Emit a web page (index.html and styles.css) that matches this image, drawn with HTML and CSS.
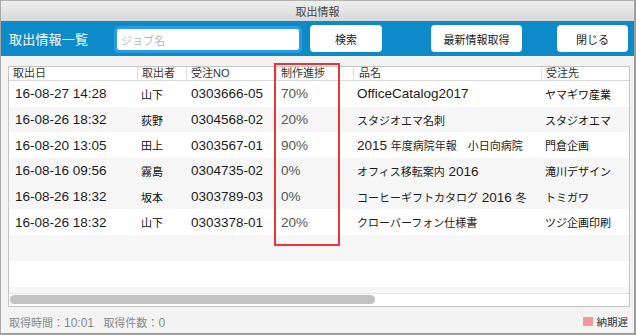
FILE: index.html
```html
<!DOCTYPE html>
<html lang="ja">
<head>
<meta charset="utf-8">
<title>取出情報</title>
<link rel="stylesheet" href="styles.css">
</head>
<body>
<div class="window">
  <div class="titlebar">取出情報</div>
  <div class="toolbar">
    <div class="apptitle">取出情報一覧</div>
    <input class="search" type="text" placeholder="ジョブ名">
    <button class="btn btn-search">検索</button>
    <button class="btn btn-fetch">最新情報取得</button>
    <button class="btn btn-close">閉じる</button>
  </div>
  <div class="content">
    <div class="tablebox">
      <div class="thead">
        <span>取出日</span><span>取出者</span><span>受注NO</span><span>制作進捗</span><span class="c5">品名</span><span>受注先</span>
      </div>
      <div class="rows">
        <div class="row">
          <span class="c1">16-08-27 14:28</span><span class="c2">山下</span><span class="c3">0303666-05</span><span class="c4">70%</span><span class="c5">OfficeCatalog2017</span><span class="c6">ヤマギワ産業</span>
        </div>
        <div class="row g">
          <span class="c1">16-08-26 18:32</span><span class="c2">荻野</span><span class="c3">0304568-02</span><span class="c4">20%</span><span class="c5"><span class="j">スタジオエマ名刺</span></span><span class="c6">スタジオエマ</span>
        </div>
        <div class="row">
          <span class="c1">16-08-20 13:05</span><span class="c2">田上</span><span class="c3">0303567-01</span><span class="c4">90%</span><span class="c5">2015 <span class="j">年度病院年報　小日向病院</span></span><span class="c6">門倉企画</span>
        </div>
        <div class="row g">
          <span class="c1">16-08-16 09:56</span><span class="c2">霧島</span><span class="c3">0304735-02</span><span class="c4">0%</span><span class="c5"><span class="j">オフィス移転案内</span> 2016</span><span class="c6">滝川デザイン</span>
        </div>
        <div class="row g">
          <span class="c1">16-08-26 18:32</span><span class="c2">坂本</span><span class="c3">0303789-03</span><span class="c4">0%</span><span class="c5"><span class="j">コーヒーギフトカタログ</span> 2016 <span class="j">冬</span></span><span class="c6">トミガワ</span>
        </div>
        <div class="row">
          <span class="c1">16-08-26 18:32</span><span class="c2">山下</span><span class="c3">0303378-01</span><span class="c4">20%</span><span class="c5"><span class="j">クローバーフォン仕様書</span></span><span class="c6">ツジ企画印刷</span>
        </div>
        <div class="row g"></div>
        <div class="row"></div>
        <div class="row g"></div>
      </div>
      <div class="hscroll"><div class="thumb"></div></div>
      <div class="highlight"></div>
    </div>
    <div class="footer">
      <div class="status"><span class="j">取得時間：</span>10:01 <span class="j gap">取得件数：</span>0</div>
      <div class="legend"><span class="swatch"></span><span class="legend-text">納期遅</span></div>
    </div>
  </div>
</div>
</body>
</html>
```

FILE: styles.css
```css
html, body {
  margin: 0;
  padding: 0;
}

body {
  width: 636px;
  height: 335px;
  overflow: hidden;
  background: #ffffff;
  font-family: "Liberation Sans", "Noto Sans CJK JP", sans-serif;
}

.window {
  box-sizing: border-box;
  width: 636px;
  height: 335px;
  border-left: 1px solid #a6a6a6;
  border-right: 2px solid #9e9e9e;
  border-bottom: 2px solid #a0a0a0;
  background: #f3f3f3;
  display: flex;
  flex-direction: column;
}

.titlebar {
  height: 21px;
  box-sizing: border-box;
  border-top: 1px solid #b2b2b2;
  background: linear-gradient(#efefef, #d8d8d8);
  display: flex;
  align-items: center;
  justify-content: center;
  font-family: "Noto Sans CJK JP", sans-serif;
  font-size: 11px;
  color: #444444;
}

.toolbar {
  height: 35px;
  background: #0d8bc9;
  display: flex;
  align-items: center;
  padding-left: 8px;
}

.apptitle {
  width: 108px;
  color: #ffffff;
  font-family: "Noto Sans CJK JP", sans-serif;
  font-size: 13px;
  letter-spacing: 0.2px;
}

.search {
  width: 182px;
  height: 21px;
  box-sizing: border-box;
  margin: 2px 0 0 0;
  border: 0;
  border-radius: 2px;
  box-shadow: 0 0 0 3px #2c9ce0;
  background: #ffffff;
  padding: 0 4px;
  font-family: "Noto Sans CJK JP", sans-serif;
  font-size: 11px;
  color: #333333;
  outline: none;
}

.search::placeholder {
  color: #b9b9b9;
}

.btn {
  height: 27px;
  box-sizing: border-box;
  padding: 0;
  border: 0;
  border-radius: 4px;
  background: #ffffff;
  font-family: "Noto Sans CJK JP", sans-serif;
  font-size: 11px;
  color: #222222;
}

.btn-search { width: 72px; margin-left: 11px; }
.btn-fetch { width: 91px; margin-left: 49px; }
.btn-close { width: 71px; margin-left: 35px; }

.content {
  flex: 1;
  padding: 10px 5px 0 7px;
  display: flex;
  flex-direction: column;
}

.tablebox {
  position: relative;
  width: 622px;
  height: 241px;
  box-sizing: border-box;
  border: 1px solid #c4c4c4;
  background: #ffffff;
  display: flex;
  flex-direction: column;
}

.thead {
  display: grid;
  grid-template-columns: 128px 49px 90px 77px 188px 88px;
  height: 13px;
  border-bottom: 1px solid #d9d9d9;
  font-size: 11px;
  line-height: 13px;
  color: #333333;
}

.thead span {
  padding-left: 4px;
  border-left: 1px solid #dddddd;
  white-space: nowrap;
  overflow: hidden;
}

.thead span:first-child {
  border-left: 0;
}

.thead span.c5 {
  padding-left: 5px;
}

.rows {
  height: 212px;
  overflow: hidden;
}

.row {
  display: grid;
  grid-template-columns: 128px 49px 90px 77px 188px 88px;
  height: 25.7px;
  align-items: center;
  font-size: 13.5px;
  color: #1c1c1c;
  white-space: nowrap;
}

.row.g {
  background: #f6f6f6;
}

.row > span {
  overflow: hidden;
}

.c1 { padding-left: 6px; }
.c2 { padding-left: 4px; font-size: 11px; color: #111111; }
.c3 { padding-left: 5px; }
.c4 { padding-left: 5px; color: #555555; }
.c5 { padding-left: 4px; }
.c6 { padding-left: 4px; font-size: 11px; color: #111111; }

.j {
  font-size: 11px;
}

.hscroll {
  height: 13px;
  box-sizing: border-box;
  border-top: 1px solid #e6e6e6;
  padding: 1px 0 0 1px;
}

.thumb {
  width: 365px;
  height: 9px;
  border-radius: 5px;
  background: #c2c2c2;
}

.highlight {
  position: absolute;
  left: 265px;
  top: -4px;
  width: 66px;
  height: 183px;
  box-sizing: border-box;
  border: 2px solid #e8353c;
}

.footer {
  height: 26px;
  box-sizing: border-box;
  padding: 3px 1px 0 1px;
  display: flex;
  align-items: center;
  justify-content: space-between;
}

.status {
  font-size: 12px;
  color: #888888;
}

.status .j {
  font-size: 11px;
}

.status .gap {
  margin-left: 6px;
}

.legend {
  display: flex;
  align-items: center;
}

.swatch {
  width: 10px;
  height: 9px;
  background: #f59896;
  margin-right: 4px;
}

.legend-text {
  font-family: "Noto Sans CJK JP", sans-serif;
  font-size: 10.5px;
  color: #333333;
}
```
